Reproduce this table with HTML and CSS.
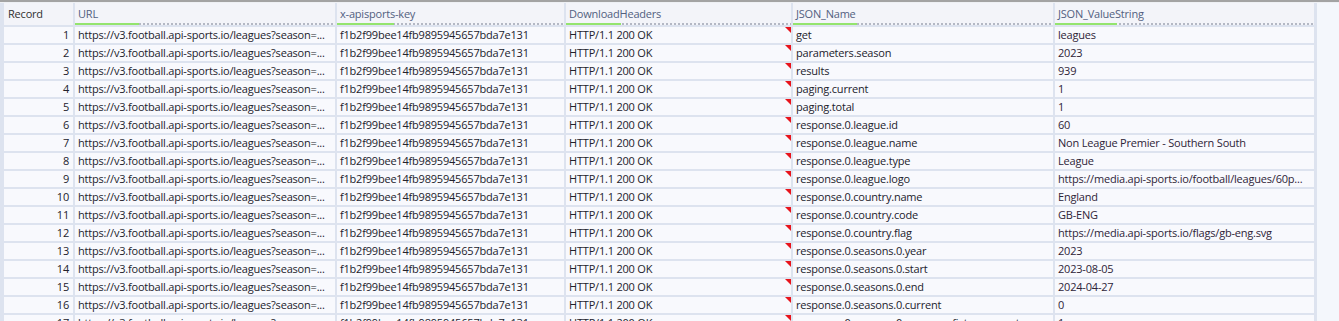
FILE: index.html
```html
<!DOCTYPE html>
<html lang="en">
<head>
    <meta charset="UTF-8">
    <title>Results</title>
    <link rel="stylesheet" href="styles.css">
</head>
<body>
    <div class="topline"></div>
    <div class="results">
        <div class="grid">
            <div class="row head">
                <div class="cell rec">Record</div>
                <div class="cell"><span class="label">URL</span><span class="bar" style="width: 24.5%"></span></div>
                <div class="cell"><span class="label">x-apisports-key</span><span class="bar" style="width: 25%"></span></div>
                <div class="cell"><span class="label">DownloadHeaders</span><span class="bar" style="width: 24.5%"></span></div>
                <div class="cell"><span class="label">JSON_Name</span><span class="bar" style="width: 24.5%"></span></div>
                <div class="cell"><span class="label">JSON_ValueString</span><span class="bar" style="width: 24%"></span></div>
            </div>
            <div class="row"><div class="cell num">1</div><div class="cell">https://v3.football.api-sports.io/leagues?season=...</div><div class="cell">f1b2f99bee14fb9895945657bda7e131</div><div class="cell flag">HTTP/1.1 200 OK</div><div class="cell">get</div><div class="cell val">leagues</div></div>
            <div class="row"><div class="cell num">2</div><div class="cell">https://v3.football.api-sports.io/leagues?season=...</div><div class="cell">f1b2f99bee14fb9895945657bda7e131</div><div class="cell flag">HTTP/1.1 200 OK</div><div class="cell">parameters.season</div><div class="cell val">2023</div></div>
            <div class="row"><div class="cell num">3</div><div class="cell">https://v3.football.api-sports.io/leagues?season=...</div><div class="cell">f1b2f99bee14fb9895945657bda7e131</div><div class="cell flag">HTTP/1.1 200 OK</div><div class="cell">results</div><div class="cell val">939</div></div>
            <div class="row"><div class="cell num">4</div><div class="cell">https://v3.football.api-sports.io/leagues?season=...</div><div class="cell">f1b2f99bee14fb9895945657bda7e131</div><div class="cell flag">HTTP/1.1 200 OK</div><div class="cell">paging.current</div><div class="cell val">1</div></div>
            <div class="row"><div class="cell num">5</div><div class="cell">https://v3.football.api-sports.io/leagues?season=...</div><div class="cell">f1b2f99bee14fb9895945657bda7e131</div><div class="cell flag">HTTP/1.1 200 OK</div><div class="cell">paging.total</div><div class="cell val">1</div></div>
            <div class="row"><div class="cell num">6</div><div class="cell">https://v3.football.api-sports.io/leagues?season=...</div><div class="cell">f1b2f99bee14fb9895945657bda7e131</div><div class="cell flag">HTTP/1.1 200 OK</div><div class="cell">response.0.league.id</div><div class="cell val">60</div></div>
            <div class="row"><div class="cell num">7</div><div class="cell">https://v3.football.api-sports.io/leagues?season=...</div><div class="cell">f1b2f99bee14fb9895945657bda7e131</div><div class="cell flag">HTTP/1.1 200 OK</div><div class="cell">response.0.league.name</div><div class="cell val">Non League Premier - Southern South</div></div>
            <div class="row"><div class="cell num">8</div><div class="cell">https://v3.football.api-sports.io/leagues?season=...</div><div class="cell">f1b2f99bee14fb9895945657bda7e131</div><div class="cell flag">HTTP/1.1 200 OK</div><div class="cell">response.0.league.type</div><div class="cell val">League</div></div>
            <div class="row"><div class="cell num">9</div><div class="cell">https://v3.football.api-sports.io/leagues?season=...</div><div class="cell">f1b2f99bee14fb9895945657bda7e131</div><div class="cell flag">HTTP/1.1 200 OK</div><div class="cell">response.0.league.logo</div><div class="cell val">https://media.api-sports.io/football/leagues/60p...</div></div>
            <div class="row"><div class="cell num">10</div><div class="cell">https://v3.football.api-sports.io/leagues?season=...</div><div class="cell">f1b2f99bee14fb9895945657bda7e131</div><div class="cell flag">HTTP/1.1 200 OK</div><div class="cell">response.0.country.name</div><div class="cell val">England</div></div>
            <div class="row"><div class="cell num">11</div><div class="cell">https://v3.football.api-sports.io/leagues?season=...</div><div class="cell">f1b2f99bee14fb9895945657bda7e131</div><div class="cell flag">HTTP/1.1 200 OK</div><div class="cell">response.0.country.code</div><div class="cell val">GB-ENG</div></div>
            <div class="row"><div class="cell num">12</div><div class="cell">https://v3.football.api-sports.io/leagues?season=...</div><div class="cell">f1b2f99bee14fb9895945657bda7e131</div><div class="cell flag">HTTP/1.1 200 OK</div><div class="cell">response.0.country.flag</div><div class="cell val">https://media.api-sports.io/flags/gb-eng.svg</div></div>
            <div class="row"><div class="cell num">13</div><div class="cell">https://v3.football.api-sports.io/leagues?season=...</div><div class="cell">f1b2f99bee14fb9895945657bda7e131</div><div class="cell flag">HTTP/1.1 200 OK</div><div class="cell">response.0.seasons.0.year</div><div class="cell val">2023</div></div>
            <div class="row"><div class="cell num">14</div><div class="cell">https://v3.football.api-sports.io/leagues?season=...</div><div class="cell">f1b2f99bee14fb9895945657bda7e131</div><div class="cell flag">HTTP/1.1 200 OK</div><div class="cell">response.0.seasons.0.start</div><div class="cell val">2023-08-05</div></div>
            <div class="row"><div class="cell num">15</div><div class="cell">https://v3.football.api-sports.io/leagues?season=...</div><div class="cell">f1b2f99bee14fb9895945657bda7e131</div><div class="cell flag">HTTP/1.1 200 OK</div><div class="cell">response.0.seasons.0.end</div><div class="cell val">2024-04-27</div></div>
            <div class="row"><div class="cell num">16</div><div class="cell">https://v3.football.api-sports.io/leagues?season=...</div><div class="cell">f1b2f99bee14fb9895945657bda7e131</div><div class="cell flag">HTTP/1.1 200 OK</div><div class="cell">response.0.seasons.0.current</div><div class="cell val">0</div></div>
            <div class="row"><div class="cell num">17</div><div class="cell">https://v3.football.api-sports.io/leagues?season=...</div><div class="cell">f1b2f99bee14fb9895945657bda7e131</div><div class="cell flag">HTTP/1.1 200 OK</div><div class="cell">response.0.seasons.0.coverage.fixtures.events</div><div class="cell val">1</div></div>
        </div>
        <div class="filler"></div>
    </div>
</body>
</html>
```

FILE: styles.css
```css
body, html {
    margin: 0;
    padding: 0;
    height: 100%;
    overflow: hidden;
    font-family: "Open Sans", "Noto Sans", sans-serif;
    font-size: 11px;
    letter-spacing: -0.2px;
    color: #22222c;
    background-color: #f4f7fc;
}
.topline {
    height: 2px;
    background-color: #a3a3a3;
    border-bottom: 1px solid #eef0f4;
}
.results {
    display: flex;
    align-items: flex-start;
}
.grid {
    background-color: #dde3ef;
    padding-left: 4px;
    padding-right: 2px;
}
.row {
    display: grid;
    grid-template-columns: 69px 260px 227px 225px 260px 259px;
    column-gap: 2px;
    height: 16px;
    margin-bottom: 2px;
}
.cell {
    position: relative;
    background-color: #f8f9fd;
    padding-left: 3px;
    line-height: 16px;
    white-space: nowrap;
    overflow: hidden;
}
.cell.num {
    text-align: right;
    padding-left: 0;
    padding-right: 4px;
}
.cell.val {
    color: #2e2438;
}
.cell.flag::after {
    content: "";
    position: absolute;
    top: 0;
    right: 0;
    border-top: 6px solid #e8141c;
    border-left: 6px solid transparent;
}

.row.head {
    height: 22px;
}
.head .cell {
    background-color: #f3f4f9;
    line-height: 22px;
    color: #52607f;
    background-image: repeating-linear-gradient(90deg, #b4b8c4 0 2px, transparent 2px 4px);
    background-size: 100% 2px;
    background-position: left bottom;
    background-repeat: no-repeat;
}
.head .cell.rec {
    padding-left: 4px;
    color: #303030;
    background-image: none;
}
.head .label {
    display: block;
}
.head .bar {
    position: absolute;
    left: 0;
    bottom: 0;
    height: 2px;
    background-color: #94e46e;
}

.filler {
    flex: 1;
    align-self: stretch;
    min-height: 330px;
    border-left: 1px solid #dde3ef;
    background-color: #f4f7fc;
}
```
